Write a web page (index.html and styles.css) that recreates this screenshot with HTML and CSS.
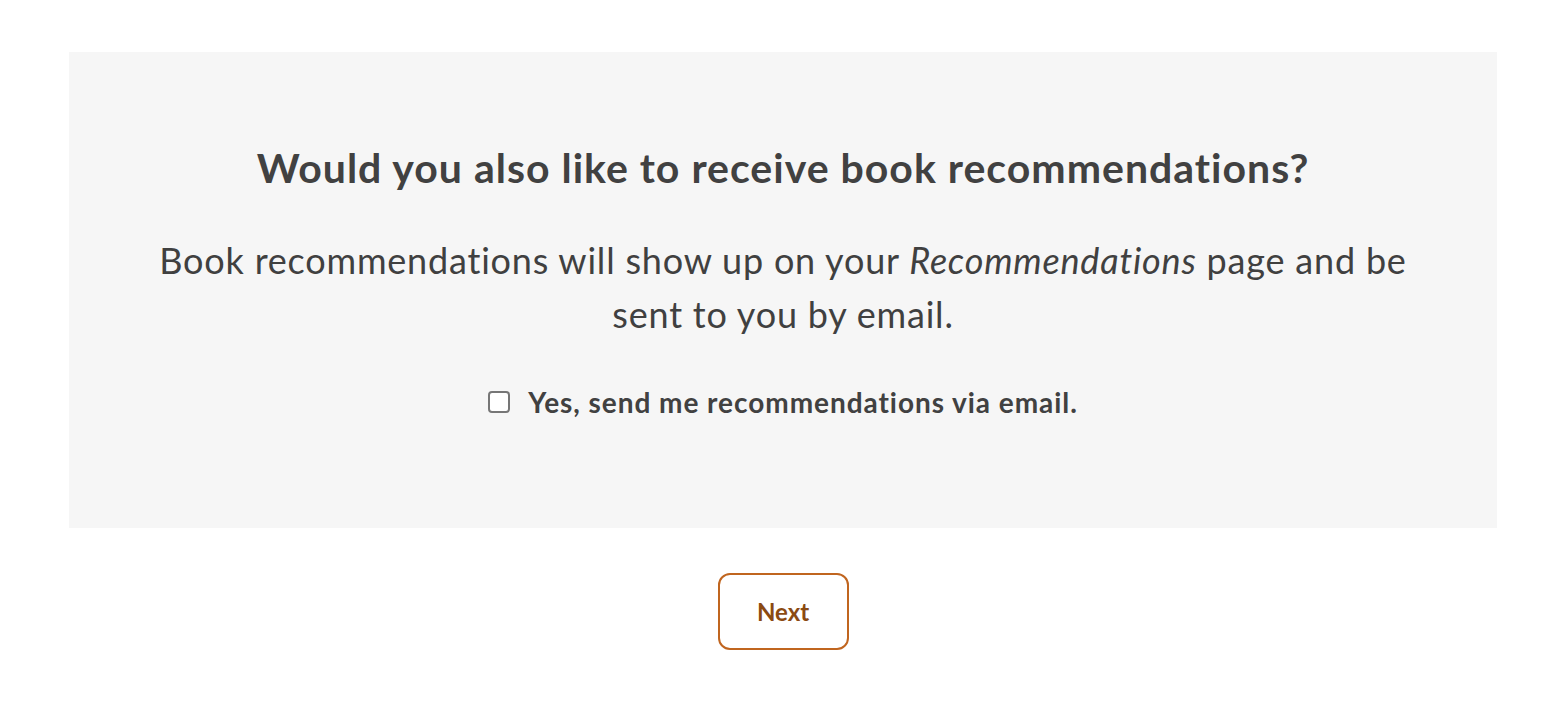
FILE: index.html
```html
<!DOCTYPE html>
<html lang="en">
<head>
<meta charset="utf-8">
<title>Recommendations</title>
<link rel="stylesheet" href="styles.css">
</head>
<body>
<main class="page">
  <section class="panel">
    <h1 class="title">Would you also like to receive book recommendations?</h1>
    <p class="lead">Book recommendations will show up on your <em>Recommendations</em> page and be sent to you by email.</p>
    <label class="optin">
      <span class="box"></span>
      <span class="optin-text">Yes, send me recommendations via email.</span>
    </label>
  </section>
  <div class="actions">
    <button class="next" type="button">Next</button>
  </div>
</main>
</body>
</html>
```
FILE: styles.css
```css
* { box-sizing: border-box; }
html, body { margin: 0; padding: 0; background: #fff; }
body {
  font-family: Lato, "Open Sans", "Liberation Sans", sans-serif;
  color: #404040;
}
.page {
  width: 1428px;
  margin: 52px auto 0;
}
.panel {
  background: #f6f6f6;
  height: 476px;
  padding: 89px 70px 0;
  display: flex;
  flex-direction: column;
  align-items: center;
}
.title {
  margin: 0;
  font-size: 41px;
  line-height: 54px;
  letter-spacing: 1px;
  font-weight: 700;
  color: #414141;
  text-align: center;
}
.lead {
  margin: 38px 0 0;
  max-width: 1270px;
  font-size: 36px;
  line-height: 54px;
  letter-spacing: 0.8px;
  font-weight: 400;
  text-align: center;
}
.lead em { font-style: italic; }
.optin {
  margin-top: 44px;
  display: flex;
  align-items: center;
  gap: 18px;
  line-height: 34px;
}
.box {
  width: 22px;
  height: 22px;
  background: #fff;
  border: 2px solid #767676;
  border-radius: 4px;
}
.optin-text {
  font-size: 28px;
  letter-spacing: 0.95px;
  font-weight: 700;
  color: #414141;
}
.actions {
  display: flex;
  justify-content: center;
  padding-top: 45px;
}
.next {
  width: 131px;
  height: 77px;
  background: #fff;
  border: 2px solid #c0651f;
  border-radius: 12px;
  font-family: inherit;
  font-size: 24px;
  font-weight: 700;
  color: #8b4a12;
  cursor: pointer;
}
```
